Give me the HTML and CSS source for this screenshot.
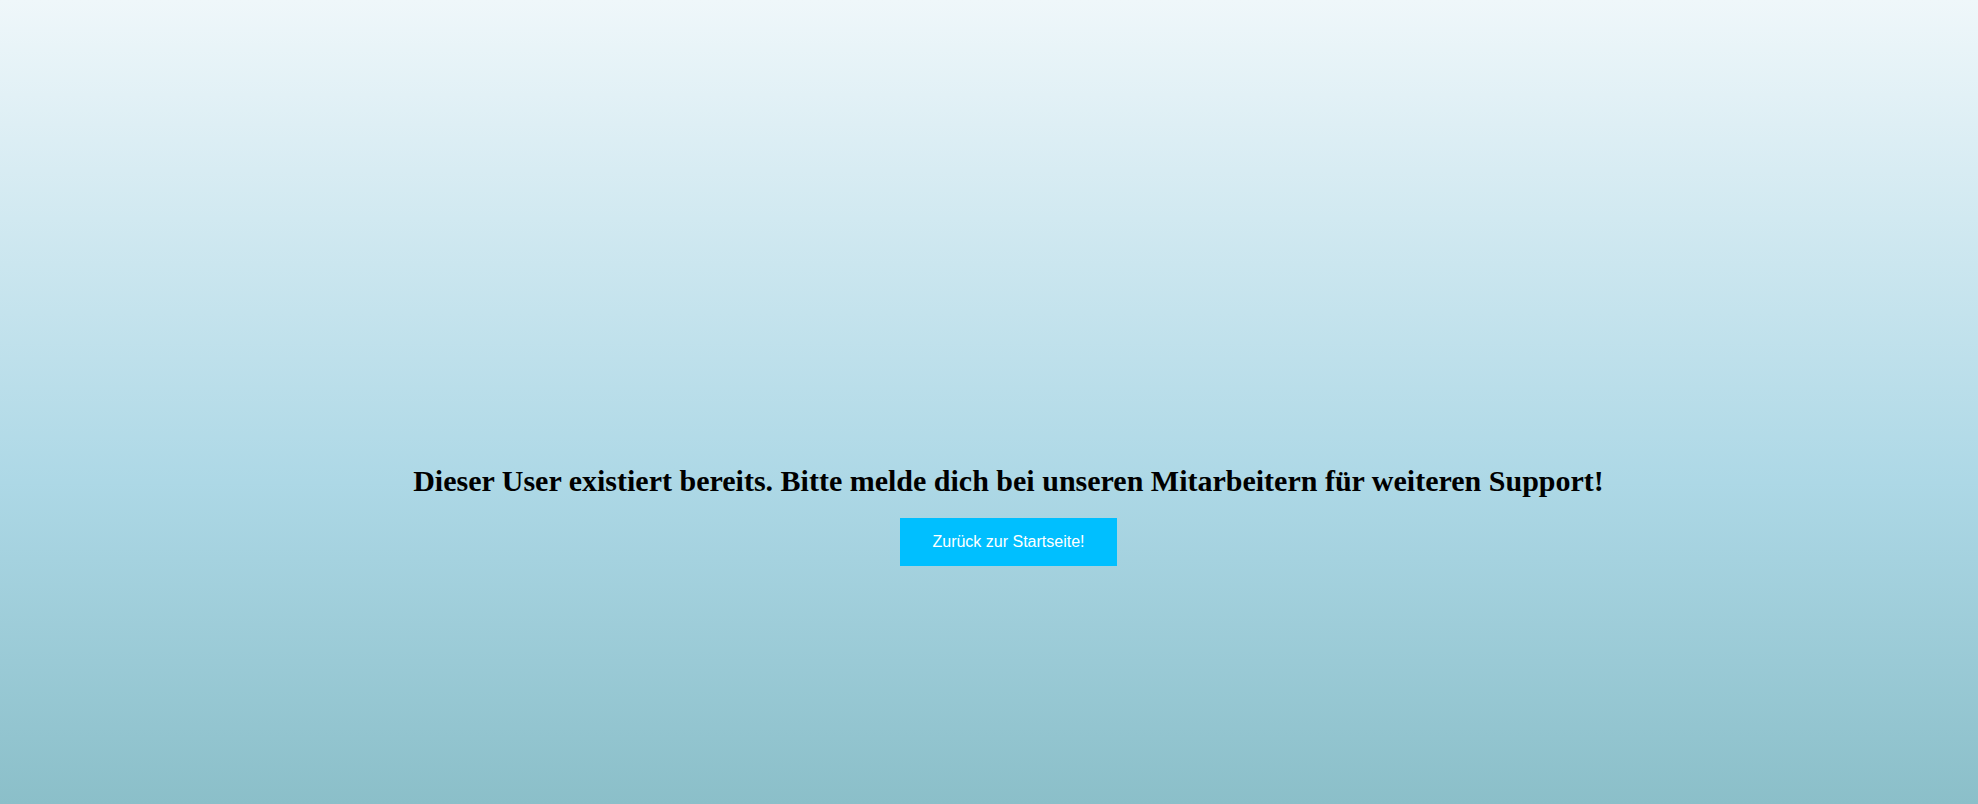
FILE: index.html
```html
<!DOCTYPE html>
<html lang="de">
<head>
<meta charset="utf-8">
<title>User existiert bereits</title>
<link rel="stylesheet" href="styles.css">
</head>
<body>
<main class="page">
  <h1 class="message">Dieser User existiert bereits. Bitte melde dich bei unseren Mitarbeitern für weiteren Support!</h1>
  <a class="home-button" href="#">Zurück zur Startseite!</a>
</main>
</body>
</html>
```
FILE: styles.css
```css
html, body {
  margin: 0;
  padding: 0;
  height: 100%;
}
body {
  background: linear-gradient(to bottom, #eff7fa 0%, #add8e6 60%, #8bbfc9 100%);
  font-family: "Liberation Serif", "Times New Roman", serif;
}
.page {
  min-height: 100vh;
  box-sizing: border-box;
  display: flex;
  flex-direction: column;
  align-items: center;
  padding-top: 464px;
  padding-left: 39px;
}
.message {
  margin: 0;
  font-size: 30px;
  font-weight: bold;
  color: #000;
  line-height: normal;
}
.home-button {
  margin-top: 20px;
  display: block;
  background: #00bfff;
  color: #fff;
  text-decoration: none;
  font-family: "Liberation Sans", Arial, sans-serif;
  font-size: 16px;
  line-height: 18px;
  padding: 15px 32px;
}
```
